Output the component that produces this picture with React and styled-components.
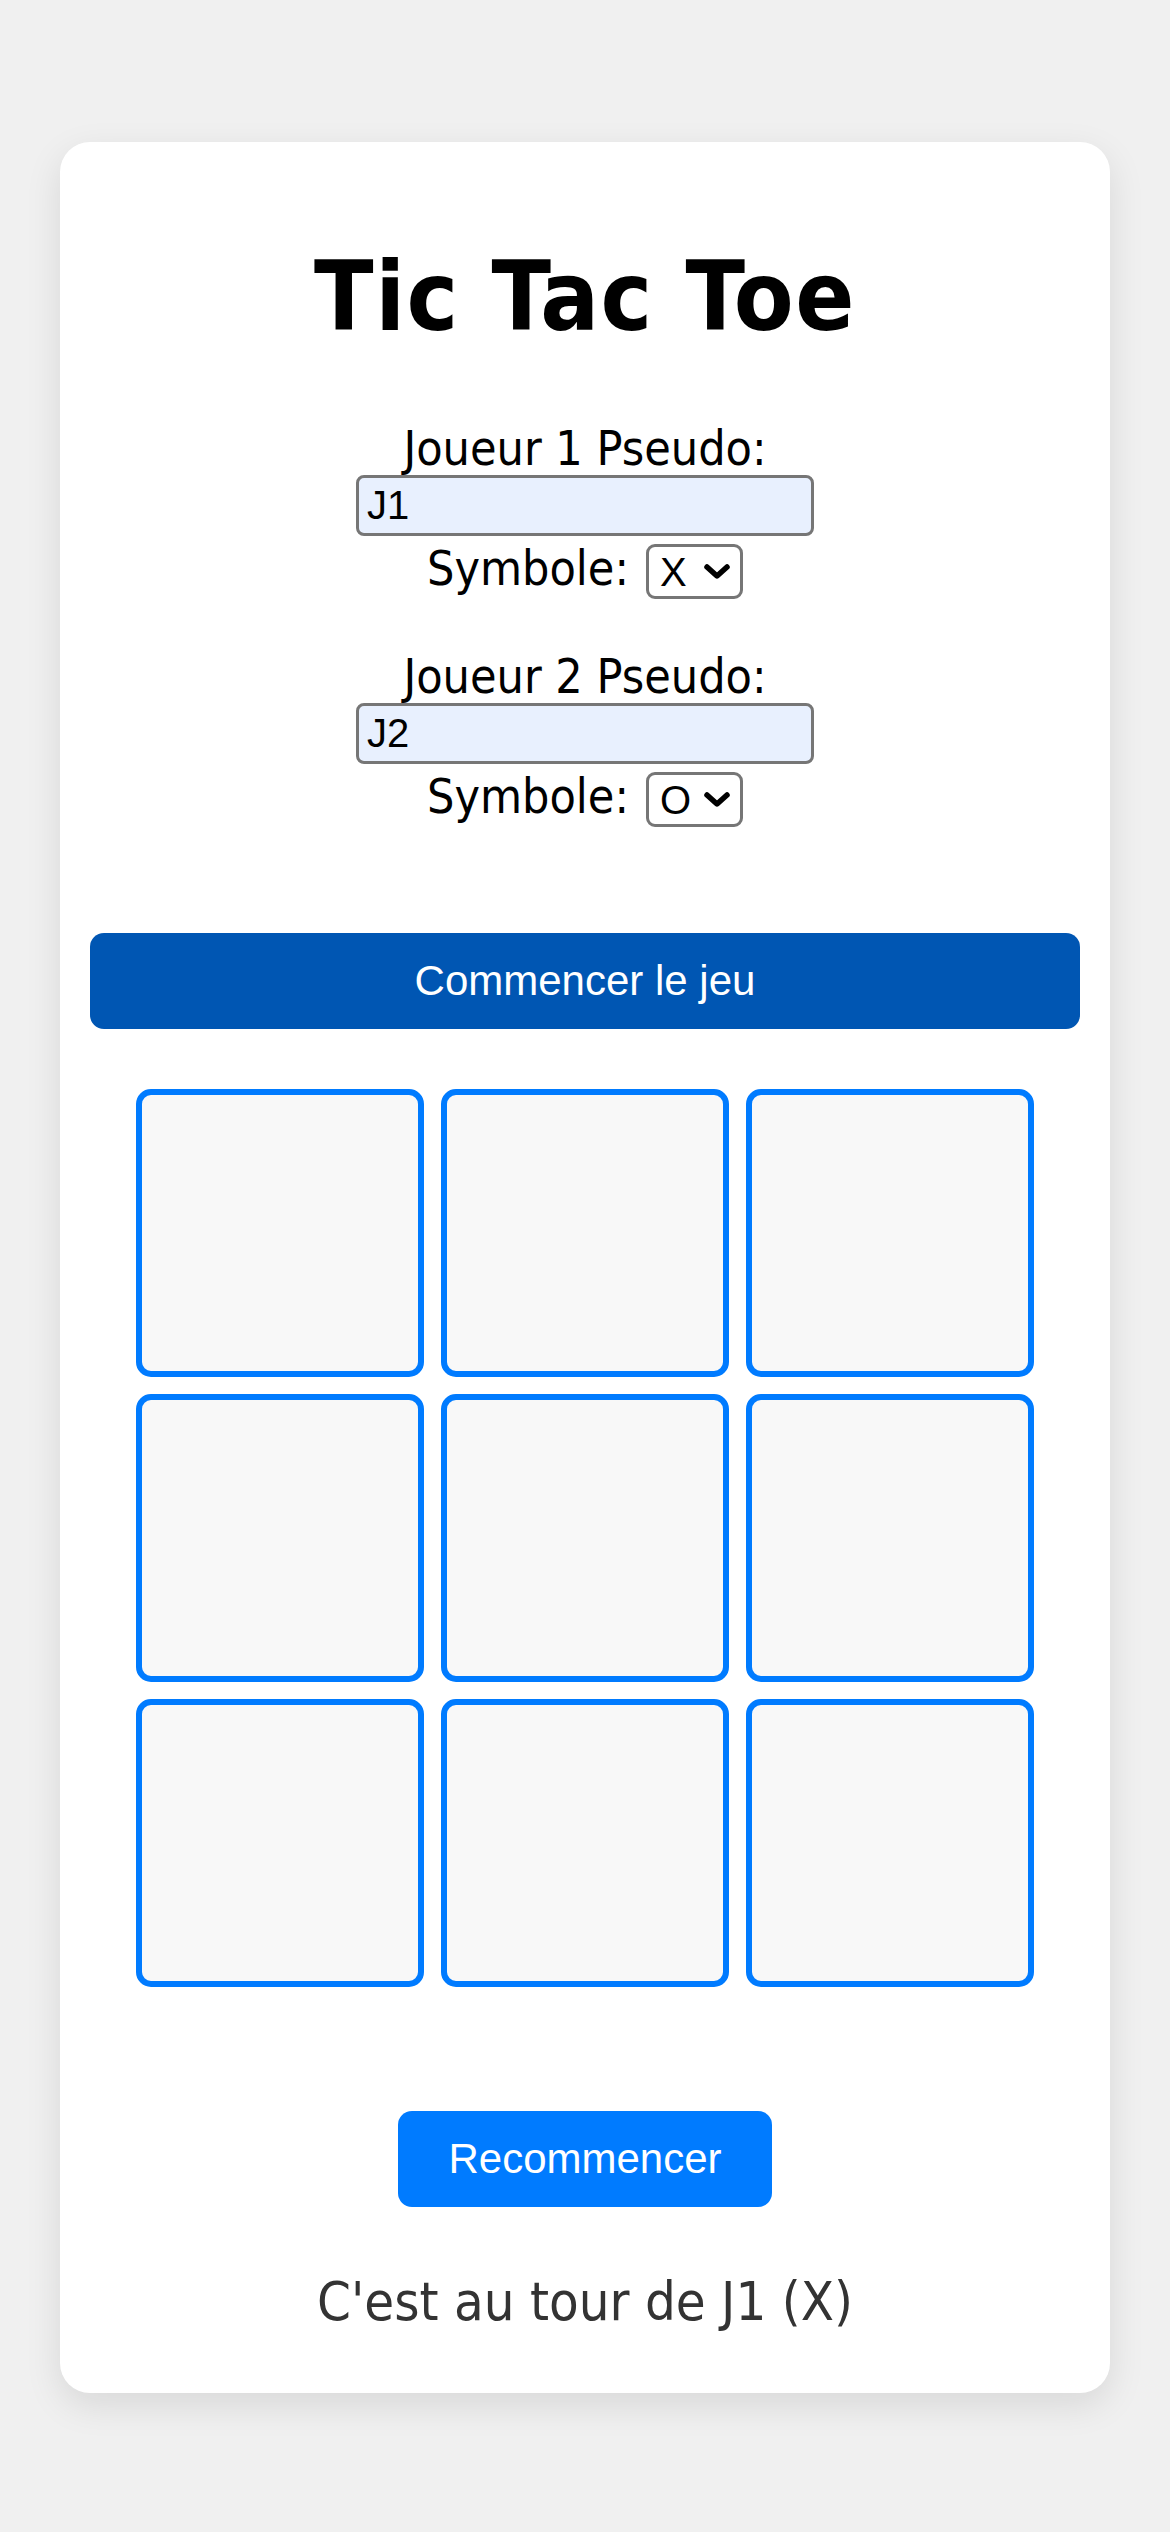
import React, { useState } from 'react';
import styled, { createGlobalStyle } from 'styled-components';

const GlobalStyle = createGlobalStyle`
  html, body {
    margin: 0;
    padding: 0;
    background: #f0f0f0;
  }
  body {
    font-family: Tahoma, "DejaVu Sans Condensed", "DejaVu Sans", sans-serif;
  }
`;

const Page = styled.div`
  min-height: 2532px;
  padding: 142px 60px 0;
  box-sizing: border-box;
`;

const Card = styled.div`
  background: #fff;
  border-radius: 30px;
  padding: 97px 30px 60px;
  box-shadow: 0 12px 36px rgba(0, 0, 0, 0.1);
  display: flex;
  flex-direction: column;
  align-items: center;
`;

const Title = styled.h1`
  margin: 0 0 66px;
  font-size: 97px;
  line-height: 116px;
  font-weight: bold;
  letter-spacing: 1.5px;
  color: #000;
`;

const PlayerBlock = styled.div`
  display: flex;
  flex-direction: column;
  align-items: center;
  margin-bottom: ${props => props.last ? '106px' : '50px'};
`;

const Label = styled.label`
  font-size: 48px;
  line-height: 54px;
  color: #000;
`;

const NameInput = styled.input`
  box-sizing: border-box;
  width: 458px;
  height: 61px;
  border: 3px solid #767676;
  border-radius: 8px;
  background: #e8f0fe;
  padding: 0 8px;
  font-family: "Liberation Sans", Arial, sans-serif;
  font-size: 40px;
  color: #000;
  outline: none;
`;

const SymbolRow = styled.div`
  display: flex;
  align-items: flex-start;
  gap: 17px;
  margin-top: 8px;
`;

const SymbolLabel = styled.span`
  font-size: 48px;
  line-height: 48px;
  color: #000;
`;

const SelectWrap = styled.div`
  position: relative;
  width: 97px;
  height: 55px;
`;

const Select = styled.select`
  appearance: none;
  -webkit-appearance: none;
  box-sizing: border-box;
  width: 100%;
  height: 100%;
  border: 3px solid #767676;
  border-radius: 9px;
  background: #fff;
  padding: 0 0 0 11px;
  font-family: "Liberation Sans", Arial, sans-serif;
  font-size: 40px;
  color: #000;
  outline: none;
`;

const Chevron = styled.svg`
  position: absolute;
  right: 12px;
  top: 19px;
  pointer-events: none;
`;

const StartButton = styled.button`
  align-self: stretch;
  height: 96px;
  border: none;
  border-radius: 14px;
  background: #0056b3;
  color: #fff;
  font-family: "Liberation Sans", Arial, sans-serif;
  font-size: 42px;
  cursor: pointer;
  margin-bottom: 60px;
`;

const Board = styled.div`
  display: grid;
  grid-template-columns: repeat(3, 288px);
  grid-auto-rows: 288px;
  gap: 17px;
  justify-content: center;
  margin-bottom: 124px;
`;

const Cell = styled.button`
  box-sizing: border-box;
  border: 6px solid #007bff;
  border-radius: 15px;
  background: #f8f8f8;
  font-family: "Liberation Sans", Arial, sans-serif;
  font-size: 120px;
  color: #333;
  cursor: pointer;
  padding: 0;
`;

const ResetButton = styled.button`
  height: 96px;
  padding: 0 50px;
  border: none;
  border-radius: 14px;
  background: #007bff;
  color: #fff;
  font-family: "Liberation Sans", Arial, sans-serif;
  font-size: 42px;
  cursor: pointer;
  margin-bottom: 63px;
`;

const Status = styled.div`
  font-size: 54px;
  line-height: 63px;
  color: #333;
`;

const SymbolSelect = ({ value, onChange }) => (
  <SelectWrap>
    <Select value={value} onChange={e => onChange(e.target.value)}>
      <option value="X">X</option>
      <option value="O">O</option>
    </Select>
    <Chevron width="28" height="17" viewBox="0 0 28 17">
      <path d="M4 4 L14 13 L24 4" fill="none" stroke="#000" strokeWidth="5.5" strokeLinecap="round" strokeLinejoin="round" />
    </Chevron>
  </SelectWrap>
);

const App = () => {
  const [p1, setP1] = useState('J1');
  const [p2, setP2] = useState('J2');
  const [s1, setS1] = useState('X');
  const [s2, setS2] = useState('O');
  const [cells, setCells] = useState(Array(9).fill(''));
  const [turn, setTurn] = useState(0);

  const current = turn === 0 ? { name: p1, sym: s1 } : { name: p2, sym: s2 };

  const play = (i) => {
    if (cells[i]) return;
    const next = [...cells];
    next[i] = current.sym;
    setCells(next);
    setTurn(turn === 0 ? 1 : 0);
  };

  const reset = () => {
    setCells(Array(9).fill(''));
    setTurn(0);
  };

  return (
    <>
      <GlobalStyle />
      <Page>
        <Card>
          <Title>Tic Tac Toe</Title>

          <PlayerBlock>
            <Label>Joueur 1 Pseudo:</Label>
            <NameInput value={p1} onChange={e => setP1(e.target.value)} />
            <SymbolRow>
              <SymbolLabel>Symbole:</SymbolLabel>
              <SymbolSelect value={s1} onChange={setS1} />
            </SymbolRow>
          </PlayerBlock>

          <PlayerBlock last>
            <Label>Joueur 2 Pseudo:</Label>
            <NameInput value={p2} onChange={e => setP2(e.target.value)} />
            <SymbolRow>
              <SymbolLabel>Symbole:</SymbolLabel>
              <SymbolSelect value={s2} onChange={setS2} />
            </SymbolRow>
          </PlayerBlock>

          <StartButton onClick={reset}>Commencer le jeu</StartButton>

          <Board>
            {cells.map((c, i) => (
              <Cell key={i} onClick={() => play(i)}>{c}</Cell>
            ))}
          </Board>

          <ResetButton onClick={reset}>Recommencer</ResetButton>

          <Status>C'est au tour de {current.name} ({current.sym})</Status>
        </Card>
      </Page>
    </>
  );
};

export default App;
